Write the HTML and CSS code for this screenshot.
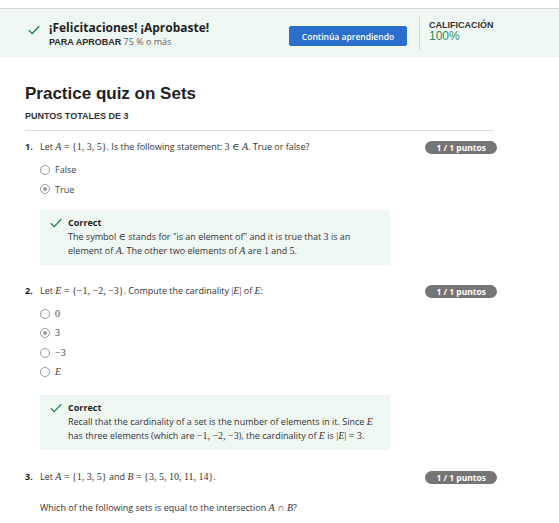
FILE: index.html
```html
<!DOCTYPE html>
<html lang="es">
<head>
<meta charset="utf-8">
<title>Practice quiz on Sets</title>
<link rel="stylesheet" href="styles.css">
</head>
<body>
<header class="band">
  <svg class="band-check" width="12" height="10" viewBox="0 0 12 10"><path d="M0.8 5.2 L4.2 8.6 L11.2 1.2" fill="none" stroke="#1f8354" stroke-width="1.4"/></svg>
  <div class="band-text">
    <div class="band-title">¡Felicitaciones! ¡Aprobaste!</div>
    <div class="band-sub"><b>PARA APROBAR</b> 75 % o más</div>
  </div>
  <button class="band-btn">Continúa aprendiendo</button>
  <div class="band-grade">
    <div class="grade-label">CALIFICACIÓN</div>
    <div class="grade-value">100%</div>
  </div>
</header>

<main class="quiz">
  <h1 class="quiz-title">Practice quiz on Sets</h1>
  <div class="quiz-points">PUNTOS TOTALES DE 3</div>
  <hr class="rule">

  <section class="q">
    <div class="q-row">
      <div class="q-text"><span class="q-num">1.</span>Let <span class="m"><i>A</i> = {1, 3, 5}</span>. Is the following statement: <span class="m">3 ∈ <i>A</i></span>. True or false?</div>
      <span class="pill">1 / 1 puntos</span>
    </div>
    <div class="opts">
      <div class="opt"><span class="radio"></span>False</div>
      <div class="opt"><span class="radio on"></span>True</div>
    </div>
    <div class="fb">
      <svg class="fb-check" width="12" height="10" viewBox="0 0 12 10"><path d="M0.8 5.2 L4.2 8.6 L11.2 1.2" fill="none" stroke="#1f8354" stroke-width="1.3"/></svg>
      <div class="fb-body">
        <div class="fb-title">Correct</div>
        <div class="fb-text">The symbol <span class="m">∈</span> stands for "is an element of" and it is true that <span class="m">3</span> is an element of <span class="m"><i>A</i></span>. The other two elements of <span class="m"><i>A</i></span> are <span class="m">1</span> and <span class="m">5</span>.</div>
      </div>
    </div>
  </section>

  <section class="q">
    <div class="q-row">
      <div class="q-text"><span class="q-num">2.</span>Let <span class="m"><i>E</i> = {−1, −2, −3}</span>. Compute the cardinality <span class="m">|<i>E</i>|</span> of <span class="m"><i>E</i></span>:</div>
      <span class="pill">1 / 1 puntos</span>
    </div>
    <div class="opts">
      <div class="opt"><span class="radio"></span><span class="m">0</span></div>
      <div class="opt"><span class="radio on"></span><span class="m">3</span></div>
      <div class="opt"><span class="radio"></span><span class="m">−3</span></div>
      <div class="opt"><span class="radio"></span><span class="m"><i>E</i></span></div>
    </div>
    <div class="fb">
      <svg class="fb-check" width="12" height="10" viewBox="0 0 12 10"><path d="M0.8 5.2 L4.2 8.6 L11.2 1.2" fill="none" stroke="#1f8354" stroke-width="1.3"/></svg>
      <div class="fb-body">
        <div class="fb-title">Correct</div>
        <div class="fb-text">Recall that the cardinality of a set is the number of elements in it. Since <span class="m"><i>E</i></span> has three elements (which are <span class="m">−1, −2, −3</span>), the cardinality of <span class="m"><i>E</i></span> is <span class="m">|<i>E</i>| = 3</span>.</div>
      </div>
    </div>
  </section>

  <section class="q">
    <div class="q-row">
      <div class="q-text"><span class="q-num">3.</span>Let <span class="m"><i>A</i> = {1, 3, 5}</span> and <span class="m"><i>B</i> = {3, 5, 10, 11, 14}</span>.</div>
      <span class="pill">1 / 1 puntos</span>
    </div>
    <p class="q-extra">Which of the following sets is equal to the intersection <span class="m"><i>A</i> ∩ <i>B</i></span>?</p>
  </section>
</main>
</body>
</html>
```

FILE: styles.css
```css
* { box-sizing: border-box; }
html, body { margin: 0; padding: 0; background: #fff; }
body {
  font-family: "Open Sans", "DejaVu Sans", sans-serif;
  color: #333;
  width: 559px;
  overflow: hidden;
}

.band {
  margin-top: 8px;
  border-top: 1px solid #d6d6d6;
  height: 49px;
  background: #eff7f3;
  display: flex;
  align-items: flex-start;
  padding-left: 28px;
}
.band-check { margin-top: 16px; flex: none; }
.band-text { margin-left: 9px; width: 240px; margin-top: 10px; flex: none; }
.band-title {
  font-size: 12px;
  font-weight: 700;
  line-height: 17px;
  color: #1f1f1f;
}
.band-sub {
  font-size: 9px;
  line-height: 12px;
  color: #666;
}
.band-sub b {
  font-family: "Liberation Sans", Arial, sans-serif;
  font-size: 9px;
  color: #2a2a2a;
}
.band-btn {
  margin-top: 17px;
  width: 118px;
  height: 20px;
  border: 0;
  border-radius: 2px;
  background: #2a6fcb;
  color: #fff;
  font-family: "Open Sans", sans-serif;
  font-size: 8.5px;
  font-weight: 600;
  padding: 0;
  flex: none;
}
.band-grade {
  margin-left: 12px;
  margin-top: 8px;
  height: 33px;
  border-left: 1px solid #d6d6d6;
  padding-left: 9px;
  padding-top: 3px;
}
.grade-label {
  font-family: "Liberation Sans", Arial, sans-serif;
  font-size: 9px;
  font-weight: 700;
  line-height: 10px;
  color: #333;
}
.grade-value {
  font-family: "Liberation Sans", Arial, sans-serif;
  font-size: 12px;
  line-height: 12px;
  color: #2e8a58;
}

.quiz { padding: 0 0 0 25px; }
.quiz-title {
  margin: 26px 0 0;
  font-family: "Liberation Sans", Arial, sans-serif;
  font-size: 17px;
  line-height: 22px;
  font-weight: 700;
  color: #1f1f1f;
}
.quiz-points {
  margin-top: 5px;
  font-family: "Liberation Sans", Arial, sans-serif;
  font-size: 9px;
  line-height: 12px;
  font-weight: 700;
  color: #333;
}
.rule {
  margin: 8px 0 0;
  width: 468px;
  border: 0;
  border-top: 1px solid #dcdcdc;
  height: 0;
}

.q { margin-top: 9px; }
.q + .q { margin-top: 19px; }
.q:last-child { margin-top: 20px; }
.q-row {
  width: 472px;
  display: flex;
  justify-content: space-between;
  align-items: center;
  height: 14px;
}
.q-text {
  font-size: 9px;
  line-height: 14px;
  color: #333;
  white-space: nowrap;
}
.q-num {
  display: inline-block;
  width: 15px;
  font-weight: 700;
  color: #1f1f1f;
}
.m {
  font-family: "Liberation Serif", "DejaVu Serif", serif;
  font-size: 10px;
  line-height: 1;
}
.m i { font-style: italic; }
.pill {
  display: inline-block;
  height: 13px;
  line-height: 13px;
  padding: 0 11px;
  border-radius: 7px;
  background: #757575;
  color: #fff;
  font-size: 8.5px;
  font-weight: 700;
}

.opts { margin-top: 6px; padding-left: 15px; }
.opt {
  display: flex;
  align-items: center;
  height: 19.5px;
  font-size: 9px;
  color: #444;
}
.radio {
  width: 10px;
  height: 10px;
  border: 1px solid #9a9a9a;
  border-radius: 50%;
  margin-right: 5px;
  flex: none;
  position: relative;
  background: #fff;
}
.radio.on::after {
  content: "";
  position: absolute;
  left: 2px;
  top: 2px;
  width: 4px;
  height: 4px;
  border-radius: 50%;
  background: #9a9a9a;
}

.fb {
  margin: 11px 0 0 15px;
  width: 350px;
  background: #eff7f3;
  padding: 6px 10px 7px 10px;
  display: flex;
  align-items: flex-start;
}
.q + .q .fb { margin-top: 13px; }
.fb-check { margin-top: 2px; flex: none; }
.fb-body { margin-left: 6px; }
.fb-title {
  font-size: 9px;
  font-weight: 700;
  line-height: 14px;
  color: #1f1f1f;
}
.fb-text {
  font-size: 9px;
  line-height: 14px;
  color: #333;
}

.q-extra {
  margin: 17px 0 0 15px;
  font-size: 9px;
  line-height: 14px;
  color: #333;
}
```
